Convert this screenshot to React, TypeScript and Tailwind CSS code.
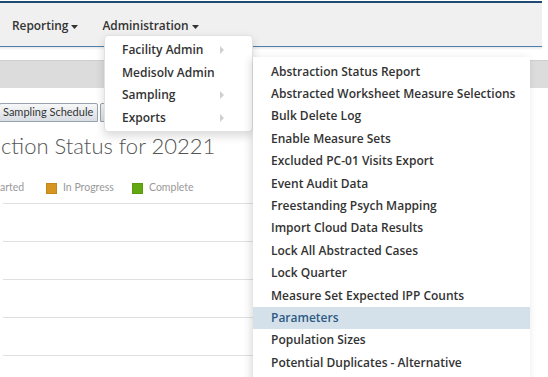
import React from "react";

const Caret = () => (
  <svg width="7" height="4" viewBox="0 0 7 4" className="ml-[3px] mt-[2px]">
    <path d="M0 0 L7 0 L3.5 4 Z" fill="#333" />
  </svg>
);

const RightArrow = () => (
  <svg width="4" height="8" viewBox="0 0 4 8">
    <path d="M0 0 L4 4 L0 8 Z" fill="#cfcfcf" />
  </svg>
);

const subItems = [
  "Abstraction Status Report",
  "Abstracted Worksheet Measure Selections",
  "Bulk Delete Log",
  "Enable Measure Sets",
  "Excluded PC-01 Visits Export",
  "Event Audit Data",
  "Freestanding Psych Mapping",
  "Import Cloud Data Results",
  "Lock All Abstracted Cases",
  "Lock Quarter",
  "Measure Set Expected IPP Counts",
  "Parameters",
  "Population Sizes",
  "Potential Duplicates - Alternative",
];

const segoe = { fontFamily: 'Lato, "Open Sans", sans-serif' };

export default function App() {
  return (
    <div
      className="relative w-[548px] h-[377px] overflow-hidden bg-white"
      style={{ fontFamily: '"Open Sans", "Noto Sans", sans-serif' }}
    >
      {/* top bar */}
      <div className="pt-[1px] w-[542px]">
        <div className="h-[2px] bg-[#1e4a73]" />
        <div className="h-[44px] bg-[#f0f0f0] border-b border-[#4f7fae] flex items-center pt-[3px] pl-[12px] text-[11.9px] font-semibold text-[#333]">
          <div className="flex items-center">
            Reporting
            <Caret />
          </div>
          <div className="flex items-center ml-[24px]">
            Administration
            <Caret />
          </div>
        </div>
        <div className="h-[3px] bg-gradient-to-b from-[#e8e8e8] to-white" />
      </div>

      {/* gray band */}
      <div className="mt-[10px] h-[28px] bg-[#dcdcdc] border-t border-[#cfcfcf]" />

      {/* tabs */}
      <div className="mt-[15px] flex items-end h-[19px]">
        <div
          className="h-[19px] w-[99px] border border-[#9aa3ad] rounded-t-[2px] bg-gradient-to-b from-[#f6f7f8] to-[#d9dee4] text-[11px] text-[#333] flex items-center pl-[3px] -ml-[1px] whitespace-nowrap overflow-hidden"
          style={segoe}
        >
          Sampling Schedule
        </div>
        <div className="h-[19px] w-[40px] border border-[#9aa3ad] rounded-t-[2px] bg-gradient-to-b from-[#f6f7f8] to-[#d9dee4] ml-[2px]" />
      </div>

      {/* title */}
      <div
        className="mt-[7px] text-[22px] font-light text-[#555] leading-[34px] ml-[1px] whitespace-nowrap"
        style={segoe}
      >
        ction Status for 20221
      </div>

      {/* legend */}
      <div className="mt-[18px] flex items-center text-[10.5px] text-[#999] h-[14px]" style={segoe}>
        <span className="w-[27px]">arted</span>
        <span className="ml-[19px] w-[11px] h-[11px] bg-[#d6951f] border border-[#c4861a]" />
        <span className="ml-[6px] w-[51px]">In Progress</span>
        <span className="ml-[18px] w-[11px] h-[11px] bg-[#63a811] border border-[#5a9a10]" />
        <span className="ml-[6px]">Complete</span>
      </div>

      {/* table lines */}
      <div className="mt-[8px] ml-[3px] w-[260px]">
        <div className="h-[38px] border-t border-[#e0e0e0]" />
        <div className="h-[38px] border-t border-[#e0e0e0]" />
        <div className="h-[38px] border-t border-[#e0e0e0]" />
        <div className="h-[38px] border-t border-[#e0e0e0]" />
        <div className="h-[38px] border-t border-[#e0e0e0]" />
      </div>

      {/* Administration dropdown */}
      <div className="absolute left-[104px] top-[35px] w-[149px] h-[97px] bg-white rounded-[4px] border border-[#e2e2e2] shadow-[0_4px_10px_rgba(0,0,0,0.15)] py-[3px] text-[12px] font-semibold text-[#333]">
        {["Facility Admin", "Medisolv Admin", "Sampling", "Exports"].map((t, i) => (
          <div key={t} className="h-[22.5px] flex items-center pl-[17px] relative">
            {t}
            {i !== 1 && (
              <div className="absolute left-[115px] top-[7px]">
                <RightArrow />
              </div>
            )}
          </div>
        ))}
      </div>

      {/* Submenu */}
      <div className="absolute left-[253px] top-[57px] w-[277px] h-[330px] bg-white shadow-[-2px_2px_8px_rgba(0,0,0,0.15)] pt-[3.5px] text-[12px] font-semibold text-[#333]">
        {subItems.map((t) => (
          <div
            key={t}
            className={
              "h-[22.4px] flex items-center pl-[18px] whitespace-nowrap " +
              (t === "Parameters" ? "bg-[#d5e1ea] text-[#2d5a85]" : "")
            }
          >
            {t}
          </div>
        ))}
      </div>
    </div>
  );
}
